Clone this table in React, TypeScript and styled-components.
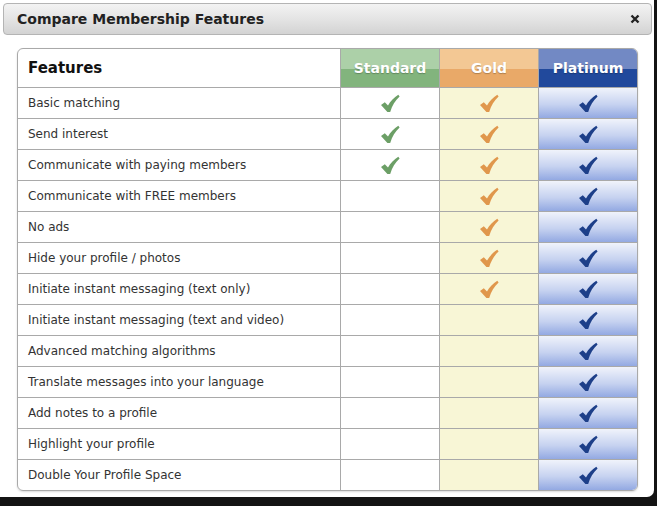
import React from 'react';
import styled, { createGlobalStyle } from 'styled-components';

// style
const GlobalStyle = createGlobalStyle`
  html, body {
    margin: 0;
    padding: 0;
    background: #141414;
    font-family: 'DejaVu Sans', Verdana, sans-serif;
  }
`;

const Dialog = styled.div`
  width: 654px;
  height: 497px;
  box-sizing: border-box;
  padding: 3px 2px 0 3px;
  background: #fff;
  border-radius: 0 0 7px 0;
`;

const TitleBar = styled.div`
  height: 32px;
  box-sizing: border-box;
  display: flex;
  align-items: center;
  justify-content: space-between;
  padding: 0 11px 0 13px;
  border: 1px solid #b4b4b4;
  border-radius: 4px;
  background: linear-gradient(to bottom, #f3f3f3 0%, #e4e4e4 50%, #d3d3d3 100%);
`;

const Title = styled.h1`
  margin: 0;
  font-size: 14px;
  font-weight: bold;
  color: #222;
`;

const Close = styled.button`
  display: flex;
  align-items: center;
  padding: 0;
  border: none;
  background: none;
  cursor: pointer;
`;

const Content = styled.div`
  padding: 13px 0 0 14px;
`;

const Table = styled.div`
  width: 621px;
  box-sizing: border-box;
  display: grid;
  grid-template-columns: 323px 99px 99px 98px;
  grid-template-rows: 39px repeat(12, 31px) 30px;
  border: 1px solid #a9a9a9;
  border-radius: 6px;
  overflow: hidden;
  box-shadow: 0 1px 2px rgba(0, 0, 0, 0.15);
`;

const Cell = styled.div<{ $last?: boolean; $lastRow?: boolean }>`
  box-sizing: border-box;
  display: flex;
  align-items: center;
  border-right: ${(p) => (p.$last ? 'none' : '1px solid #a9a9a9')};
  border-bottom: ${(p) => (p.$lastRow ? 'none' : '1px solid #a9a9a9')};
`;

const FeatureHead = styled(Cell)`
  padding-left: 10px;
  font-size: 15px;
  font-weight: bold;
  color: #111;
`;

const headColors: Record<string, [string, string]> = {
  standard: ['#acd0a8', '#82b47d'],
  gold: ['#f3c894', '#e9a968'],
  platinum: ['#7289c4', '#21499c'],
};

const PlanHead = styled(Cell)<{ $plan: string }>`
  justify-content: center;
  font-size: 14px;
  font-weight: bold;
  color: #fff;
  text-shadow: 0 1px 1px rgba(0, 0, 0, 0.25);
  background: linear-gradient(
    to bottom,
    ${(p) => headColors[p.$plan][0]} 0%,
    ${(p) => headColors[p.$plan][0]} 52%,
    ${(p) => headColors[p.$plan][1]} 52%,
    ${(p) => headColors[p.$plan][1]} 100%
  );
`;

const FeatureCell = styled(Cell)`
  padding-left: 10px;
  padding-bottom: 1px;
  font-size: 12px;
  color: #333;
`;

const cellBg: Record<string, string> = {
  standard: '#fff',
  gold: '#f8f6d6',
  platinum: 'linear-gradient(to bottom, #f0f3fb 0%, #c6d2f0 55%, #93a9e2 100%)',
};

const PlanCell = styled(Cell)<{ $plan: string }>`
  justify-content: center;
  background: ${(p) => cellBg[p.$plan]};
`;

const checkColors: Record<string, string> = {
  standard: '#6c9f66',
  gold: '#e0974c',
  platinum: '#1d3f89',
};

// data
const plans = ['standard', 'gold', 'platinum'];
const planNames: Record<string, string> = {
  standard: 'Standard',
  gold: 'Gold',
  platinum: 'Platinum',
};

const features: [string, number][] = [
  ['Basic matching', 0],
  ['Send interest', 0],
  ['Communicate with paying members', 0],
  ['Communicate with FREE members', 1],
  ['No ads', 1],
  ['Hide your profile / photos', 1],
  ['Initiate instant messaging (text only)', 1],
  ['Initiate instant messaging (text and video)', 2],
  ['Advanced matching algorithms', 2],
  ['Translate messages into your language', 2],
  ['Add notes to a profile', 2],
  ['Highlight your profile', 2],
  ['Double Your Profile Space', 2],
];

function Check({ color }: { color: string }) {
  return (
    <svg width="20" height="19" viewBox="0 0 20 19">
      <path
        d="M1 11 L4.8 8.3 L8 11.6 C10.5 7.2 14 3.4 18.3 0.8 L19.6 2.6 C15.2 6.6 12.2 11.6 10.2 18 L7.4 18 Z"
        fill={color}
      />
    </svg>
  );
}

function App() {
  return (
    <>
      <GlobalStyle />
      <Dialog>
        <TitleBar>
          <Title>Compare Membership Features</Title>
          <Close aria-label="close">
            <svg width="10" height="10" viewBox="0 0 10 10">
              <path d="M1.5 1.5 L8.5 8.5 M8.5 1.5 L1.5 8.5" stroke="#222" strokeWidth="2.4" />
            </svg>
          </Close>
        </TitleBar>
        <Content>
          <Table>
            <FeatureHead>Features</FeatureHead>
            {plans.map((plan, i) => (
              <PlanHead key={plan} $plan={plan} $last={i === 2}>
                {planNames[plan]}
              </PlanHead>
            ))}
            {features.map(([name, minPlan], r) => {
              const lastRow = r === features.length - 1;
              return (
                <React.Fragment key={name}>
                  <FeatureCell $lastRow={lastRow}>{name}</FeatureCell>
                  {plans.map((plan, i) => (
                    <PlanCell key={plan} $plan={plan} $last={i === 2} $lastRow={lastRow}>
                      {i >= minPlan && <Check color={checkColors[plan]} />}
                    </PlanCell>
                  ))}
                </React.Fragment>
              );
            })}
          </Table>
        </Content>
      </Dialog>
    </>
  );
}

export default App;
